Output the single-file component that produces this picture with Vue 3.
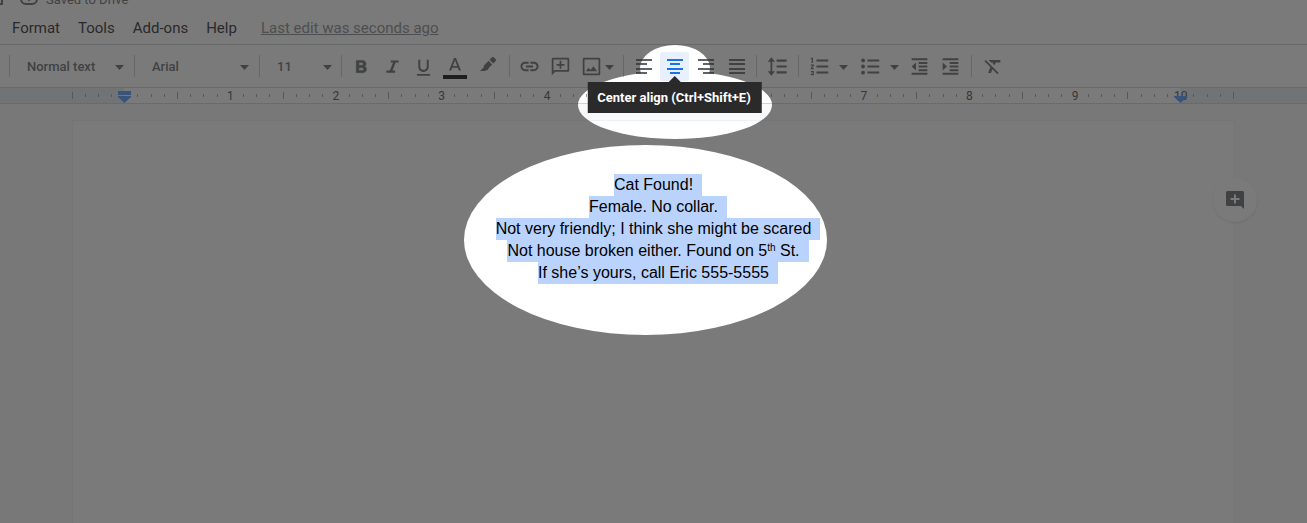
<script setup>
import { ref } from 'vue'

const menus = ['Format', 'Tools', 'Add-ons', 'Help']
const paragraphStyle = ref('Normal text')
const fontFamily = ref('Arial')
const fontSize = ref('11')

const EIGHTHS = 88
const ticks = []
const numbers = []
for (let i = 0; i <= EIGHTHS; i++) {
  const x = (i / EIGHTHS) * 100 + '%'
  const fromZero = i - 4
  if (fromZero % 8 === 0) {
    if (fromZero > 0) numbers.push({ x, label: fromZero / 8 })
  } else {
    const tall = fromZero % 4 === 0
    ticks.push({ x, y1: tall ? 4 : 6, y2: tall ? 11 : 9 })
  }
}
</script>

<template>
  <div class="editor">
    <header class="header">
      <div class="status">
        <svg class="folder" viewBox="0 0 18 18"><path d="M1 3h15v13H1z" fill="none" stroke="currentColor" stroke-width="2" /></svg>
        <svg class="cloud" viewBox="0 0 18 18"><rect x="1" y="3" width="16" height="13" rx="5" fill="none" stroke="currentColor" stroke-width="2" /><path d="M5 8l4 4 4-4" fill="none" stroke="currentColor" stroke-width="2" /></svg>
        <span>Saved to Drive</span>
      </div>
      <nav class="menubar">
        <button v-for="m in menus" :key="m" type="button" class="menu">{{ m }}</button>
        <a href="#" class="last-edit">Last edit was seconds ago</a>
      </nav>
    </header>

    <div class="toolbar" role="toolbar" aria-label="Formatting">
      <div class="lead"></div>
      <div class="drop">
        <select v-model="paragraphStyle" aria-label="Styles"><option>Normal text</option></select>
        <svg class="caret" viewBox="0 0 9 5"><path d="M0 0h9L4.500 5z" /></svg>
      </div>
      <div class="drop">
        <select v-model="fontFamily" aria-label="Font"><option>Arial</option></select>
        <svg class="caret" viewBox="0 0 9 5"><path d="M0 0h9L4.500 5z" /></svg>
      </div>
      <div class="drop size">
        <select v-model="fontSize" aria-label="Font size"><option>11</option></select>
        <svg class="caret" viewBox="0 0 9 5"><path d="M0 0h9L4.500 5z" /></svg>
      </div>
      <div class="group">
        <button type="button" class="tool" aria-label="Bold"><svg viewBox="0 0 24 24"><path d="M15.600 11.790c.970-.670 1.650-1.770 1.650-2.790 0-2.260-1.750-4-4-4H6v14h8.040c2.090 0 3.710-1.700 3.710-3.790 0-1.520-.860-2.820-2.150-3.420zM9 7.500h3.500c.830 0 1.500.670 1.500 1.500s-.670 1.500-1.500 1.500H9v-3zm4 9H9v-3h4c.830 0 1.500.670 1.500 1.500s-.670 1.500-1.500 1.500z" stroke="currentColor" stroke-width=".6" /></svg></button>
        <button type="button" class="tool" aria-label="Italic"><svg viewBox="0 0 24 24"><path d="M10 5v2.500h2.600L9 16.500H5V19h10v-2.500h-3l3.600-9H19V5z" /></svg></button>
        <button type="button" class="tool underline" aria-label="Underline"><svg viewBox="0 0 24 24"><path d="M12 17c3.310 0 6-2.690 6-6V3h-2.300v8c0 2-1.660 3.700-3.700 3.700S8.300 13 8.300 11V3H6v8c0 3.310 2.690 6 6 6zM4.500 19.500v2h15v-2z" /></svg></button>
        <button type="button" class="tool" aria-label="Text color"><svg class="color-icon" viewBox="0 0 24 26"><path d="M11 5 6 17.500h2.200l1-2.700h5.600l1 2.700H18L13 5zm-1.100 7.900L12 7.300l2.100 5.600z" /><path class="swatch" d="M0 22h24v4H0z" /></svg></button>
        <button type="button" class="tool highlighter" aria-label="Highlight color"><svg viewBox="0 0 16 16"><path d="M9.500 2.800 12.300 0 13.500 0 16 2.500V3.700L13.200 6.500zM8.500 3.800l3.700 3.700L8.500 11.200V12L7.300 13.200H5.800L5 14H0L3.800 10.200V8.700z" /></svg></button>
      </div>
      <div class="group insert">
        <button type="button" class="tool" aria-label="Insert link"><svg viewBox="0 0 24 24"><path d="M3.900 12c0-1.710 1.390-3.100 3.100-3.100h4V6.700H7c-2.900 0-5.300 2.400-5.300 5.300s2.400 5.300 5.300 5.300h4v-2.200H7c-1.710 0-3.100-1.390-3.100-3.100zM8 13.100h8v-2.200H8v2.200zm9-6.400h-4v2.200h4c1.710 0 3.100 1.390 3.100 3.100s-1.390 3.100-3.100 3.100h-4v2.200h4c2.900 0 5.300-2.400 5.300-5.300s-2.400-5.300-5.300-5.300z" /></svg></button>
        <button type="button" class="tool" aria-label="Add comment"><svg viewBox="0 0 24 24"><path d="M20.500 2h-17C2.700 2 2 2.700 2 3.500V22l4-4h14.500c.8 0 1.500-.7 1.500-1.500v-13c0-.8-.7-1.500-1.500-1.500zM20 16H5.200L4 17.200V4h16zM11 5.500v3.500H7.500v2H11v3.500h2V11h3.500V9H13V5.500z" /></svg></button>
        <button type="button" class="tool" aria-label="Insert image"><svg viewBox="0 0 24 24"><path d="M20.500 2h-17C2.700 2 2 2.700 2 3.500v17c0 .8.7 1.500 1.500 1.500h17c.8 0 1.500-.7 1.500-1.500v-17c0-.8-.7-1.500-1.500-1.500zM20 20H4V4h16zM5.500 17.500l3-4 2.200 2.500 3.600-4.300 4.200 5.800z" /></svg></button>
        <button type="button" class="more near" aria-label="Image options"><svg viewBox="0 0 9 5"><path d="M0 0h9L4.500 5z" /></svg></button>
      </div>
      <div class="group">
        <button type="button" class="tool lines" aria-label="Left align"><svg viewBox="0 0 16 16"><path d="M0 1h16v2H0zM0 5h11v2H0zM0 10h16v2H0zM0 14h11v2H0z" /></svg></button>
        <div class="tip-anchor">
          <button type="button" class="tool lines active" aria-label="Center align" aria-describedby="align-tip"><svg viewBox="0 0 16 16"><path d="M0 1h16v2H0zM3 5h10v2H3zM0 10h16v2H0zM3 14h10v2H3z" /></svg></button>
          <div id="align-tip" class="tooltip" role="tooltip">Center align (Ctrl+Shift+E)</div>
        </div>
        <button type="button" class="tool lines" aria-label="Right align"><svg viewBox="0 0 16 16"><path d="M0 1h16v2H0zM5 5h11v2H5zM0 10h16v2H0zM5 14h11v2H5z" /></svg></button>
        <button type="button" class="tool lines" aria-label="Justify"><svg viewBox="0 0 16 16"><path d="M0 1h16v2H0zM0 5h16v2H0zM0 10h16v2H0zM0 14h16v2H0z" /></svg></button>
      </div>
      <div class="group spacing">
        <button type="button" class="tool" aria-label="Line spacing"><svg viewBox="0 0 24 24"><path d="M6 6.500h3.200L5 1.500 .8 6.500H4v11H.8l4.200 5 4.200-5H6zM11 4v2.500h11.500V4zm0 16h11.500v-2.500H11zm0-6.800h11.500v-2.400H11z" /></svg></button>
      </div>
      <div class="group lists">
        <button type="button" class="tool" aria-label="Numbered list"><svg viewBox="0 0 24 24"><path d="M2 18.500h2.500v.5H3v1h1.500v.5H2v1.500h3.500v-5H2zm1-10.500h1.500V2H2v1.300h1zm-1 3h2L2 13.600v1.400h3.500v-1.300h-2l2-2.400V9.700H2zm6.500-7v2.400H22V4zm0 16H22v-2.400H8.500zm0-6.800H22v-2.400H8.500z" /></svg></button>
        <button type="button" class="more" aria-label="Numbered list options"><svg viewBox="0 0 9 5"><path d="M0 0h9L4.500 5z" /></svg></button>
        <button type="button" class="tool bullets" aria-label="Bulleted list"><svg viewBox="0 0 24 24"><path d="M8.500 4v2.400H22V4zm0 16H22v-2.400H8.500zm0-6.800H22v-2.400H8.500z" /><circle cx="3.500" cy="5" r="2.200" /><circle cx="3.500" cy="12" r="2.200" /><circle cx="3.500" cy="19" r="2.200" /></svg></button>
        <button type="button" class="more" aria-label="Bulleted list options"><svg viewBox="0 0 9 5"><path d="M0 0h9L4.500 5z" /></svg></button>
        <button type="button" class="tool" aria-label="Decrease indent"><svg viewBox="0 0 24 24"><path d="M3 21.500h18v-2.300H3zM11 17.300h10V15H11zM3 12l5 4.500v-9zM3 2.500v2.300h18V2.500zm8 6.600h10V6.800H11zM11 13.200h10v-2.300H11z" /></svg></button>
        <button type="button" class="tool" aria-label="Increase indent"><svg viewBox="0 0 24 24"><path d="M3 21.500h18v-2.300H3zM3 7.500v9L8 12zM11 17.300h10V15H11zM3 2.500v2.300h18V2.500zm8 6.600h10V6.800H11zM11 13.200h10v-2.300H11z" /></svg></button>
      </div>
      <div class="group clear">
        <button type="button" class="tool" aria-label="Clear formatting"><svg viewBox="0 0 24 24"><path d="M4.300 4.500 2.800 6l6.700 6.700L7 19.500h3.300l1.600-4.400 5.700 5.700 1.500-1.500zM7.500 4.500l2.800 2.800h2.500l-.5 1.300 2 2 1.500-3.300h5.200V4.500z" /></svg></button>
      </div>
    </div>

    <div class="ruler">
      <div class="scale">
        <svg class="marks" aria-hidden="true">
          <line v-for="t in ticks" :key="t.x" :x1="t.x" :x2="t.x" :y1="t.y1" :y2="t.y2" />
          <text v-for="n in numbers" :key="n.label" :x="n.x" y="12">{{ n.label }}</text>
        </svg>
        <svg class="marker start" viewBox="0 0 13 12"><path d="M0 0h13v4H0zM0 5h13v1L6.500 12 0 6z" /></svg>
        <svg class="marker end" viewBox="0 0 13 12"><path d="M0 5h13v1L6.500 12 0 6z" /></svg>
      </div>
    </div>

    <main class="canvas">
      <article class="page">
        <p><span>Cat Found!</span></p>
        <p><span>Female. No collar.</span></p>
        <p><span>Not very friendly; I think she might be scared</span></p>
        <p><span>Not house broken either. Found on 5<sup>th</sup> St.</span></p>
        <p><span>If she’s yours, call Eric 555-5555</span></p>
        <button type="button" class="add-comment" aria-label="Add comment"><svg viewBox="0 0 18 18"><path d="M1.500 0h15C17.300 0 18 .7 18 1.500V18l-3-3H1.500C.7 15 0 14.300 0 13.500v-12C0 .7.700 0 1.500 0zM8 3.500V7H4.500v2H8v3.500h2V9h3.500V7H10V3.500z" /></svg></button>
      </article>
    </main>

    <svg class="dimmer" aria-hidden="true">
      <defs>
        <mask id="spotlights">
          <rect width="100%" height="100%" fill="#fff" />
          <ellipse cx="675" cy="68" rx="35" ry="23" fill="#000" />
          <ellipse cx="675" cy="105" rx="97" ry="34" fill="#000" />
          <ellipse cx="645.5" cy="240" rx="181.5" ry="95" fill="#000" />
        </mask>
      </defs>
      <rect width="100%" height="100%" fill="#2f2f2f" fill-opacity="0.64" mask="url(#spotlights)" />
    </svg>
  </div>
</template>

<style>
body {
  background: #f8f9fa;
}
</style>

<style scoped>
.editor {
  position: relative;
  display: flex;
  flex-direction: column;
  min-height: 100vh;
  overflow: hidden;
  font-family: Roboto, "Liberation Sans", sans-serif;
  color: #202124;
}
button,
select {
  margin: 0;
  padding: 0;
  border: 0;
  background: none;
  font: inherit;
  color: inherit;
}
svg {
  display: block;
  fill: currentColor;
}
.header {
  background: #fff;
  border-bottom: 1px solid #c8cace;
}
.status {
  display: flex;
  align-items: center;
  height: 20px;
  margin-top: -11px;
  font-size: 13px;
  color: #5f6368;
}
.status svg {
  width: 18px;
  height: 18px;
  margin-bottom: 4px;
}
.status .folder {
  margin-left: -14px;
}
.status .cloud {
  margin-left: 16px;
  margin-right: 8px;
}
.menubar {
  display: flex;
  align-items: center;
  gap: 18px;
  height: 35px;
  padding: 3px 0 0 12px;
  box-sizing: border-box;
  font-size: 15px;
}
.last-edit {
  margin-left: 6px;
  color: #80868b;
}
.toolbar {
  display: flex;
  align-items: center;
  height: 42px;
  background: #fff;
  color: #5f6368;
}
.lead {
  width: 9px;
}
.drop,
.group {
  display: flex;
  align-items: center;
  height: 22px;
  border-left: 1px solid #c8cace;
}
.drop {
  position: relative;
  width: 125px;
  box-sizing: border-box;
}
.drop.size {
  width: 82px;
}
.drop select {
  width: 100%;
  padding-left: 17px;
  appearance: none;
  font-size: 13px;
  font-weight: 500;
}
.caret {
  position: absolute;
  right: 10px;
  top: 10px;
  width: 9px;
  height: 5px;
}
.size .caret {
  right: 9px;
}
.group {
  gap: 2px;
  padding: 0 5px;
}
.group.insert {
  padding-right: 9px;
}
.group.spacing,
.group.lists,
.group.clear {
  padding-left: 6px;
}
.group.spacing {
  padding-right: 7px;
}
.group.spacing + .group.lists {
  margin-left: -1px;
}
.group.lists {
  padding-right: 6px;
}
.tool {
  display: flex;
  align-items: center;
  justify-content: center;
  width: 29px;
  height: 29px;
  border-radius: 2px;
}
.tool svg {
  width: 21px;
  height: 21px;
}
.tool.underline {
  padding-top: 2px;
  box-sizing: border-box;
}
.tool .color-icon {
  width: 24px;
  height: 26px;
}
.swatch {
  fill: #000;
}
.tool.highlighter {
  width: 33px;
}
.tool.highlighter svg {
  width: 16px;
  height: 16px;
  margin-bottom: 2px;
}
.tool.lines svg {
  width: 16px;
  height: 16px;
}
.tool.active {
  background: #e8f0fe;
  color: #1a73e8;
}
.more {
  width: 9px;
  margin: 2px 3px 0;
}
.more.near {
  margin: 2px 0 0 -3px;
}
.tool.bullets {
  margin-left: 3px;
}
.tool.bullets + .more {
  margin-right: 4px;
}
.tip-anchor {
  position: relative;
}
.tooltip {
  position: absolute;
  z-index: 2;
  top: 30px;
  left: 50%;
  transform: translateX(-50%);
  padding: 0 11px 0 10px;
  background: #2a2a2a;
  color: #fff;
  font-size: 13px;
  font-weight: 700;
  line-height: 31px;
  white-space: nowrap;
}
.tooltip::before {
  content: "";
  position: absolute;
  left: 50%;
  bottom: 100%;
  margin-left: -6px;
  border: 6px solid transparent;
  border-top: 0;
  border-bottom-color: #2a2a2a;
}
.ruler {
  height: 15px;
  padding-right: 2px;
  background: #e8eaed;
  border: 1px solid #d0d3d7;
  border-width: 1px 0;
}
.scale {
  position: relative;
  width: 89%;
  max-width: 1162px;
  height: 15px;
  margin: 0 auto;
  background: linear-gradient(#fff, #fff) center / 91% 100% no-repeat;
}
.marks {
  width: 100%;
  height: 15px;
  overflow: visible;
}
.marks line {
  stroke: #9aa0a6;
  shape-rendering: crispEdges;
}
.marks text {
  font-size: 12px;
  text-anchor: middle;
  fill: #444746;
}
.marker {
  position: absolute;
  top: 3px;
  width: 13px;
  height: 12px;
  margin-left: -6px;
  color: #4f94ff;
}
.marker.start {
  left: 4.5%;
}
.marker.end {
  left: 95.4%;
}
.canvas {
  display: flex;
  flex: 1;
  justify-content: center;
  padding-top: 16px;
  background: #f8f9fa;
}
.page {
  position: relative;
  width: 89%;
  box-sizing: border-box;
  padding: 53px 96px 0;
  border: 1px solid #eef0f2;
  border-bottom: 0;
  background: #fff;
  color: #000;
  font-family: "Liberation Sans", Arial, sans-serif;
  font-size: 16px;
  line-height: 22px;
  text-align: center;
}
.page p {
  margin: 0;
}
.page p span {
  display: inline-block;
  margin-right: -9px;
  padding-right: 9px;
  background: #bad3fd;
}
.page sup {
  font-size: 10px;
  line-height: 0;
  vertical-align: 5px;
}
.add-comment {
  position: absolute;
  top: 57px;
  right: -23px;
  display: flex;
  align-items: center;
  justify-content: center;
  width: 44px;
  height: 44px;
  border-radius: 50%;
  background: #fff;
  box-shadow: 0 1px 3px rgba(0, 0, 0, 0.12);
  color: #5f6368;
}
.add-comment svg {
  width: 18px;
  height: 18px;
}
.dimmer {
  position: absolute;
  inset: 0;
  width: 100%;
  height: 100%;
  pointer-events: none;
}
</style>
